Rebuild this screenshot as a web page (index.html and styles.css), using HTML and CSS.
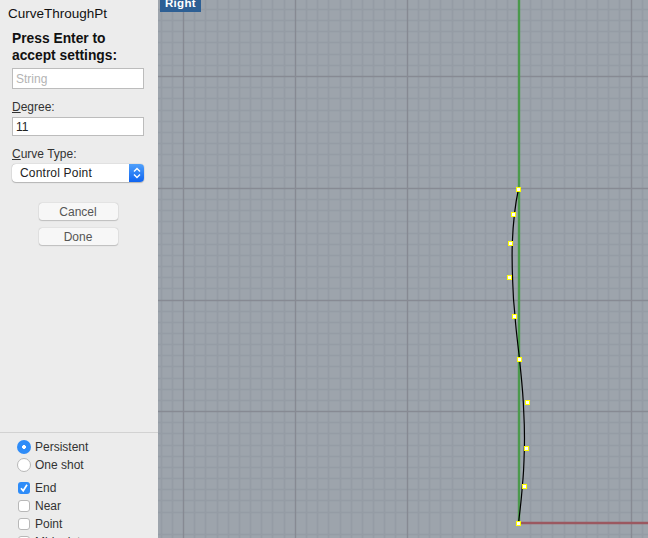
FILE: index.html
```html
<!doctype html>
<html lang="en">
  <head>
    <meta charset="UTF-8" />
    <meta name="viewport" content="width=device-width, initial-scale=1.0" />
    <title>CurveThroughPt</title>
    <link rel="stylesheet" href="styles.css">
  </head>
  <body>
    <div class="app">
      <aside class="panel">
        <div class="settings">
          <h1 class="title">CurveThroughPt</h1>
          <p class="prompt">Press Enter to<br>accept settings:</p>
          <input class="field field-string" type="text" placeholder="String" />
          <label class="field-label" for="degree"><u>D</u>egree:</label>
          <input class="field field-degree" id="degree" type="text" value="11" />
          <div class="field-label label-type"><u>C</u>urve Type:</div>
          <div class="select">
            <span class="select-value">Control Point</span>
            <span class="select-arrows">
              <svg width="8" height="12" viewBox="0 0 8 12">
                <path d="M1 4.5 L4 1.5 L7 4.5 M1 7.5 L4 10.5 L7 7.5" fill="none" stroke="#fff" stroke-width="1.4" />
              </svg>
            </span>
          </div>
          <div class="actions">
            <button class="btn" type="button">Cancel</button>
            <button class="btn" type="button">Done</button>
          </div>
        </div>
        <div class="options">
          <div class="option-group">
            <div class="option"><span class="radio radio-on"></span>Persistent</div>
            <div class="option"><span class="radio"></span>One shot</div>
          </div>
          <div class="option-group snaps">
            <div class="option">
              <span class="check check-on">
                <svg width="10" height="10" viewBox="0 0 10 10">
                  <path d="M2 5.2 L4.2 7.8 L8 1.8" fill="none" stroke="#fff" stroke-width="1.7" />
                </svg>
              </span>End
            </div>
            <div class="option"><span class="check"></span>Near</div>
            <div class="option"><span class="check"></span>Point</div>
            <div class="option"><span class="check"></span>Midpoint</div>
          </div>
        </div>
      </aside>
      <main class="viewport">
        <div class="view-tab">Right</div>
        <svg class="grid" width="490" height="538" viewBox="158 0 490 538">
          <!-- minor grid -->
          <path class="minor" d="M161.5 0V538M172.5 0V538M194.5 0V538M205.5 0V538M217.5 0V538M228.5 0V538M239.5 0V538M250.5 0V538M261.5 0V538M272.5 0V538M284.5 0V538M306.5 0V538M317.5 0V538M328.5 0V538M340.5 0V538M351.5 0V538M362.5 0V538M373.5 0V538M384.5 0V538M395.5 0V538M418.5 0V538M429.5 0V538M440.5 0V538M452.5 0V538M463.5 0V538M474.5 0V538M485.5 0V538M496.5 0V538M507.5 0V538M530.5 0V538M541.5 0V538M552.5 0V538M564.5 0V538M575.5 0V538M586.5 0V538M597.5 0V538M608.5 0V538M619.5 0V538M642.5 0V538" />
          <path class="minor" d="M158 9.5H648M158 20.5H648M158 31.5H648M158 42.5H648M158 54.5H648M158 65.5H648M158 87.5H648M158 98.5H648M158 110.5H648M158 121.5H648M158 132.5H648M158 143.5H648M158 154.5H648M158 165.5H648M158 177.5H648M158 199.5H648M158 210.5H648M158 221.5H648M158 233.5H648M158 244.5H648M158 255.5H648M158 266.5H648M158 277.5H648M158 288.5H648M158 311.5H648M158 322.5H648M158 333.5H648M158 344.5H648M158 355.5H648M158 366.5H648M158 378.5H648M158 389.5H648M158 400.5H648M158 422.5H648M158 433.5H648M158 445.5H648M158 456.5H648M158 467.5H648M158 478.5H648M158 489.5H648M158 500.5H648M158 512.5H648M158 534.5H648" />
          <!-- major grid -->
          <path class="major" d="M183.5 0V538M295.5 0V538M407.5 0V538M631.5 0V538M158 76.5H648M158 188.5H648M158 300.5H648M158 411.5H648" />
          <!-- world axes -->
          <path class="axis-y" d="M519 0V523" />
          <path class="axis-x" d="M519 523H648" />
          <!-- curve -->
          <path class="curve" d="M518.5 189C515 205 513 225 512.3 243C511.8 258 512.2 270 512.7 282C513 294 513.8 305 515 316C516 331 518 345 519.5 359C521 375 523 390 523.7 411C524.6 427 524.6 440 524.3 450C524 464 523.5 476 522.3 486C521.5 499 520 511 518.5 523" />
          <!-- control points -->
          <g class="points">
            <rect x="516.5" y="187.5" width="4" height="4" />
            <rect x="511.5" y="212.5" width="4" height="4" />
            <rect x="508.5" y="241.5" width="4" height="4" />
            <rect x="507.5" y="275.5" width="4" height="4" />
            <rect x="512.5" y="314.5" width="4" height="4" />
            <rect x="517.5" y="357.5" width="4" height="4" />
            <rect x="525.5" y="400.5" width="4" height="4" />
            <rect x="524.5" y="446.5" width="4" height="4" />
            <rect x="522.5" y="484.5" width="4" height="4" />
            <rect x="516.5" y="521.5" width="4" height="4" />
          </g>
        </svg>
      </main>
    </div>
  </body>
</html>
```

FILE: styles.css
```css
* {
  box-sizing: border-box;
}

html,
body {
  margin: 0;
  height: 100%;
  overflow: hidden;
}

body {
  font-family: "Liberation Sans", Arial, sans-serif;
  font-size: 12px;
  color: #222;
}

.app {
  display: flex;
  width: 648px;
  height: 538px;
  overflow: hidden;
}

.panel {
  flex: 0 0 158px;
  display: flex;
  flex-direction: column;
  height: 538px;
  overflow: hidden;
  background: #ececec;
}

.settings {
  flex: 0 0 433px;
  padding: 5px 14px 0 12px;
  border-bottom: 1px solid #d2d2d2;
}

.title {
  margin: 0 0 0 -4px;
  font-size: 13.5px;
  font-weight: normal;
  line-height: 17px;
  color: #111;
}

.prompt {
  margin: 8px 0 4px;
  font-size: 13.8px;
  font-weight: bold;
  line-height: 17px;
  color: #111;
}

.field {
  display: block;
  width: 132px;
  padding: 0 3px;
  border: 1px solid #bcbcbc;
  border-radius: 0;
  background: #fff;
  font: inherit;
  color: #222;
  outline: none;
}

.field-string {
  height: 21px;
}

.field-string::placeholder {
  color: #b4b4b4;
}

.field-degree {
  height: 19px;
}

.field-label {
  display: block;
  margin: 11px 0 3px;
  line-height: 14px;
  color: #333;
}

.select {
  display: flex;
  align-items: stretch;
  width: 132px;
  height: 18px;
  border-radius: 4px;
  background: #fff;
  box-shadow: 0 0 1px 0 #888, 0 1px 1px #bbb;
  overflow: hidden;
}

.select-value {
  flex: 1;
  padding-left: 8px;
  line-height: 18px;
  font-size: 12px;
  letter-spacing: 0.2px;
  color: #222;
}

.select-arrows {
  flex: 0 0 15px;
  display: flex;
  align-items: center;
  justify-content: center;
  background: linear-gradient(#4fa0fb, #0f64f0);
}

.actions {
  display: flex;
  flex-direction: column;
  align-items: center;
  gap: 8px;
  margin-top: 21px;
}

.btn {
  width: 79px;
  height: 17px;
  padding: 0;
  border: 0;
  border-radius: 3px;
  background: #f7f7f7;
  box-shadow: 0 0 1px 0 #999, 0 1px 1px #c4c4c4;
  font: inherit;
  color: #555;
}

.options {
  padding: 5px 0 0 18px;
}

.option {
  display: flex;
  align-items: center;
  gap: 5px;
  height: 18px;
  color: #333;
}

.snaps {
  margin-top: 5px;
}

.radio {
  width: 14px;
  height: 14px;
  margin-left: -1px;
  margin-right: -1px;
  border: 1px solid #b8b8b8;
  border-radius: 50%;
  background: #fff;
}

.radio-on {
  border: 0;
  background: radial-gradient(circle, #fff 0, #fff 1.6px, #2e8cf8 2.2px);
}

.check {
  display: flex;
  align-items: center;
  justify-content: center;
  width: 12px;
  height: 12px;
  border: 1px solid #b8b8b8;
  border-radius: 3px;
  background: #fff;
}

.check-on {
  border: 0;
  background: #2e8cf8;
}

.viewport {
  position: relative;
  flex: 1;
  height: 538px;
  background: #9da4ac;
}

.grid {
  display: block;
}

.minor {
  fill: none;
  stroke: #959ca5;
  stroke-width: 1.6;
}

.major {
  fill: none;
  stroke: #878a93;
  stroke-width: 1.4;
}

.axis-y {
  fill: none;
  stroke: #4b994c;
  stroke-width: 2.4;
}

.axis-x {
  fill: none;
  stroke: #9b5860;
  stroke-width: 2.4;
}

.curve {
  fill: none;
  stroke: #000;
  stroke-width: 1.2;
}

.points rect {
  fill: #fff;
  stroke: #ffff00;
  stroke-width: 1;
}

.view-tab {
  position: absolute;
  top: -5px;
  left: 2px;
  height: 17px;
  padding: 0 5px;
  background: #2d5f94;
  font-size: 11.5px;
  font-weight: bold;
  line-height: 17px;
  letter-spacing: 0.3px;
  color: #fff;
}
```
